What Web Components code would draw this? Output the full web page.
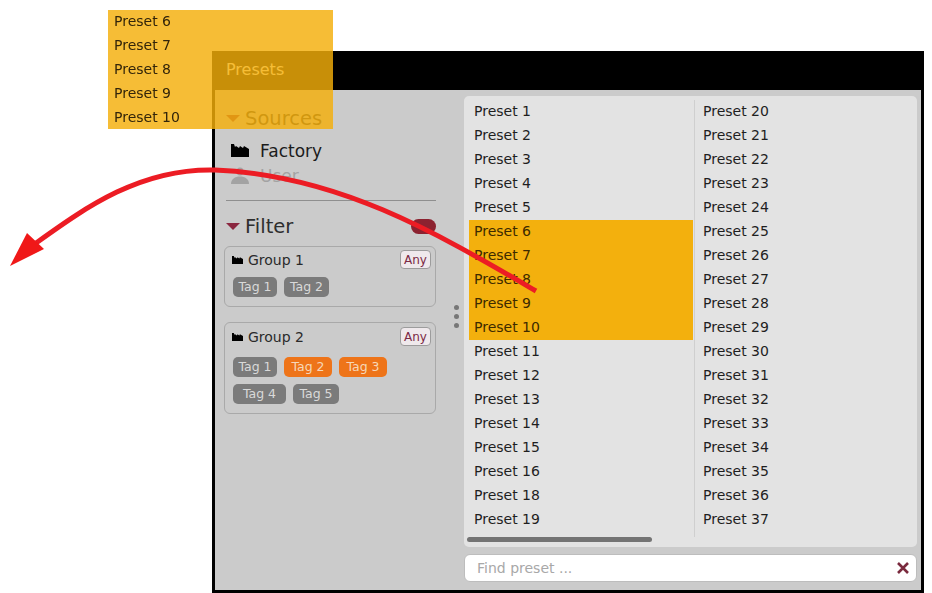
<!DOCTYPE html>
<html>
<head>
<meta charset="utf-8">
<title>Presets</title>
<style>
  html, body { margin: 0; background: #fff; }
  body { font-family: "DejaVu Sans", sans-serif; overflow: hidden; }
</style>
</head>
<body>
<preset-app></preset-app>

<script>
const FOLDER = '<svg viewBox="0 0 18 13" fill="currentColor"><path d="M0 0h3l1 3 1-1 3 2 1-2 3 2 1-2 5 3v8H0z"/></svg>'
const PERSON = '<svg viewBox="0 0 18 18" fill="currentColor"><ellipse cx="9" cy="4.5" rx="3.5" ry="4"/><path d="M0 17c0-5 4-7.500 9-7.500s9 2.500 9 7.500z"/></svg>'

class TagChip extends HTMLElement {
  constructor () {
    super()
    this.shadow = this.attachShadow({ mode: 'open' })
    this.shadow.innerHTML = /* html */`
      <style>
        :host {
          display: inline-block;
          height: 20px;
          line-height: 20px;
          border-radius: 5px;
          background: #7b7b7b;
          color: #d9d9d9;
          font-size: 12.5px;
          text-align: center;
          white-space: nowrap;
          box-sizing: border-box;
        }
        :host([on]) {
          background: #ee7419;
          color: #f6d7b8;
        }
      </style>
      <slot></slot>
    `
  }
}

class FilterGroup extends HTMLElement {
  constructor () {
    super()
    this.shadow = this.attachShadow({ mode: 'open' })
    this.shadow.innerHTML = /* html */`
      <style>
        :host {
          display: block;
          box-sizing: border-box;
          width: 212px;
          margin-left: 9px;
          padding: 3px 4px 0 8px;
          border: 1px solid #a9a9a9;
          border-radius: 6px;
          background: #cbcbcb;
        }
        :host([roomy]) {
          padding-top: 4px;
        }
        .head {
          display: flex;
          align-items: center;
          height: 19px;
          color: #2a2a2a;
          font-size: 14px;
        }
        .head svg {
          width: 11px;
          height: 8px;
          margin: 0 5px 0 -1px;
          color: #000;
        }
        .any {
          margin-left: auto;
          width: 31px;
          height: 19px;
          line-height: 18px;
          box-sizing: border-box;
          border: 1px solid #9c9c9c;
          border-radius: 4px;
          background: #efe9ec;
          color: #7b2a45;
          font-size: 12px;
          text-align: center;
        }
        .tags {
          display: flex;
          flex-wrap: wrap;
          gap: 7px;
          margin-top: 8px;
          padding-bottom: 9px;
        }
        :host([roomy]) .tags {
          margin-top: 11px;
        }
      </style>
      <div class="head">${FOLDER}<span class="name"></span><span class="any">Any</span></div>
      <div class="tags"><slot></slot></div>
    `
  }

  connectedCallback () {
    this.shadow.querySelector('.name').textContent = this.getAttribute('name')
  }
}

class SourceSidebar extends HTMLElement {
  constructor () {
    super()
    this.shadow = this.attachShadow({ mode: 'open' })
    this.shadow.innerHTML = /* html */`
      <style>
        :host {
          display: block;
          flex: none;
          width: 232px;
          padding-top: 14px;
          box-sizing: border-box;
        }
        .title {
          display: flex;
          align-items: center;
          height: 28px;
          padding-left: 11px;
          color: #2e2e2e;
          font-size: 19.5px;
        }
        .title i {
          width: 0;
          height: 0;
          margin-right: 5px;
          border-left: 7px solid transparent;
          border-right: 7px solid transparent;
          border-top: 7px solid #8b2740;
        }
        .source {
          display: flex;
          align-items: center;
          height: 25px;
          padding-left: 16px;
          color: #1c1c1c;
          font-size: 17px;
        }
        .source svg {
          width: 18px;
          height: 13px;
          margin-right: 11px;
          color: #000;
        }
        .source.off {
          color: #a3a3a3;
        }
        .source.off svg {
          height: 18px;
          color: #a3a3a3;
        }
        .sources {
          margin-top: 6px;
        }
        hr {
          height: 1px;
          margin: 12px 11px 11px 11px;
          border: 0;
          background: #8f8f8f;
        }
        .toggle {
          width: 25px;
          height: 15px;
          margin-left: auto;
          margin-right: 11px;
          border-radius: 8px;
          background: #8c2230;
        }
        .filter {
          margin-bottom: 6px;
        }
        ::slotted(filter-group) {
          margin-bottom: 15px;
        }
      </style>
      <div class="title"><i></i>Sources</div>
      <div class="sources">
        <div class="source">${FOLDER}Factory</div>
        <div class="source off">${PERSON}User</div>
      </div>
      <hr>
      <div class="title filter"><i></i>Filter<span class="toggle"></span></div>
      <slot></slot>
    `
  }
}

class PresetList extends HTMLElement {
  constructor () {
    super()
    this.shadow = this.attachShadow({ mode: 'open' })
    this.data = [
      ['Preset 1', 'Preset 2', 'Preset 3', 'Preset 4', 'Preset 5', 'Preset 6', 'Preset 7', 'Preset 8', 'Preset 9',
        'Preset 10', 'Preset 11', 'Preset 12', 'Preset 13', 'Preset 14', 'Preset 15', 'Preset 16', 'Preset 18', 'Preset 19'],
      ['Preset 20', 'Preset 21', 'Preset 22', 'Preset 23', 'Preset 24', 'Preset 25', 'Preset 26', 'Preset 27', 'Preset 28',
        'Preset 29', 'Preset 30', 'Preset 31', 'Preset 32', 'Preset 33', 'Preset 34', 'Preset 35', 'Preset 36', 'Preset 37']
    ]
    this.selected = ['Preset 6', 'Preset 7', 'Preset 8', 'Preset 9', 'Preset 10']
  }

  connectedCallback () {
    this.shadow.innerHTML = /* html */`
      <style>
        :host {
          display: block;
          box-sizing: border-box;
          height: 451px;
          padding: 4px 0 0 5px;
          border-radius: 5px;
          background: #e3e3e3;
        }
        .columns {
          display: grid;
          grid-template-columns: 225px 1fr;
          height: 437px;
        }
        .column + .column {
          border-left: 1px solid #cfcfcf;
          padding-left: 3px;
        }
        .row {
          height: 24px;
          line-height: 23px;
          width: 224px;
          padding-left: 5px;
          box-sizing: border-box;
          color: #1f1f1f;
          font-size: 14px;
        }
        .row.selected {
          background: #f3b00d;
          color: #3d2a00;
        }
        .scroll {
          width: 185px;
          height: 5px;
          margin-left: -2px;
          border-radius: 3px;
          background: #747474;
        }
      </style>
      <div class="columns"></div>
      <div class="scroll"></div>
    `
    const columns = this.shadow.querySelector('.columns')

    this.data.forEach(items => {
      const column = document.createElement('div')
      column.classList.add('column')
      columns.appendChild(column)

      items.forEach(item => {
        const row = document.createElement('div')
        row.classList.add('row')
        if (this.selected.includes(item)) row.classList.add('selected')
        row.textContent = item
        column.appendChild(row)
      })
    })
  }
}

class SearchBox extends HTMLElement {
  constructor () {
    super()
    this.shadow = this.attachShadow({ mode: 'open' })
    this.shadow.innerHTML = /* html */`
      <style>
        :host {
          display: flex;
          align-items: center;
          justify-content: space-between;
          box-sizing: border-box;
          height: 28px;
          margin-top: 7px;
          padding: 0 6px 0 12px;
          border: 1px solid #bdbdbd;
          border-radius: 6px;
          background: #fff;
          color: #a8a8a8;
          font-size: 14px;
        }
        svg {
          width: 14px;
          height: 14px;
        }
      </style>
      <span>Find preset ...</span>
      <svg viewBox="0 0 14 14"><path d="M2 2l10 10M12 2L2 12" stroke="#7a2a3e" stroke-width="2.600" fill="none"/></svg>
    `
  }
}

class PresetApp extends HTMLElement {
  constructor () {
    super()
    this.shadow = this.attachShadow({ mode: 'open' })
    this.shadow.innerHTML = /* html */`
      <style>
        :host {
          display: block;
          position: relative;
          height: 593px;
          padding: 51px 0 0 212px;
          box-sizing: border-box;
          filter: blur(0.5px);
        }
        .window {
          display: flex;
          flex-direction: column;
          box-sizing: border-box;
          width: 712px;
          height: 542px;
          border: 3px solid #000;
          border-top: 0;
          background: #cbcbcb;
        }
        .titlebar {
          flex: none;
          height: 39px;
          margin: 0 -3px;
          padding-left: 14px;
          line-height: 38px;
          background: #000;
          color: #fff;
          font-size: 16px;
        }
        .body {
          flex: 1;
          display: flex;
          min-height: 0;
        }
        .splitter {
          flex: none;
          display: flex;
          flex-direction: column;
          justify-content: center;
          gap: 4px;
          align-items: center;
          width: 17px;
          padding: 0 0 48px 1px;
          box-sizing: border-box;
        }
        .splitter i {
          width: 5px;
          height: 5px;
          border-radius: 50%;
          background: #777;
        }
        .main {
          flex: 1;
          min-width: 0;
          padding: 6px 4px 0 0;
        }
        .drag {
          position: absolute;
          left: 108px;
          top: 10px;
          width: 225px;
          height: 119px;
          background: rgba(244, 175, 10, 0.82);
          color: #33250a;
          font-size: 14px;
        }
        .drag div {
          height: 24px;
          line-height: 23px;
          padding-left: 6px;
        }
        .arrow {
          position: absolute;
          left: 0;
          top: 0;
          width: 932px;
          height: 593px;
          pointer-events: none;
        }
      </style>
      <div class="window">
        <div class="titlebar">Presets</div>
        <div class="body">
          <source-sidebar>
            <filter-group name="Group 1">
              <tag-chip style="width:44px">Tag 1</tag-chip>
              <tag-chip style="width:45px">Tag 2</tag-chip>
            </filter-group>
            <filter-group name="Group 2" roomy>
              <tag-chip style="width:44px">Tag 1</tag-chip>
              <tag-chip on style="width:48px">Tag 2</tag-chip>
              <tag-chip on style="width:48px">Tag 3</tag-chip>
              <tag-chip style="width:53px">Tag 4</tag-chip>
              <tag-chip style="width:46px">Tag 5</tag-chip>
            </filter-group>
          </source-sidebar>
          <div class="splitter"><i></i><i></i><i></i></div>
          <div class="main">
            <preset-list></preset-list>
            <search-box></search-box>
          </div>
        </div>
      </div>
      <div class="drag">
        <div>Preset 6</div>
        <div>Preset 7</div>
        <div>Preset 8</div>
        <div>Preset 9</div>
        <div>Preset 10</div>
      </div>
      <svg class="arrow" viewBox="0 0 932 593">
        <path d="M536 291C440 235 340 175 215 170C140 168 85 208 36 243" fill="none" stroke="#ec1c24" stroke-width="5"/>
        <path d="M10 266L27 233L44 249z" fill="#f01818"/>
      </svg>
    `
  }
}

customElements.define('tag-chip', TagChip)
customElements.define('filter-group', FilterGroup)
customElements.define('source-sidebar', SourceSidebar)
customElements.define('preset-list', PresetList)
customElements.define('search-box', SearchBox)
customElements.define('preset-app', PresetApp)
</script>
</body>
</html>
